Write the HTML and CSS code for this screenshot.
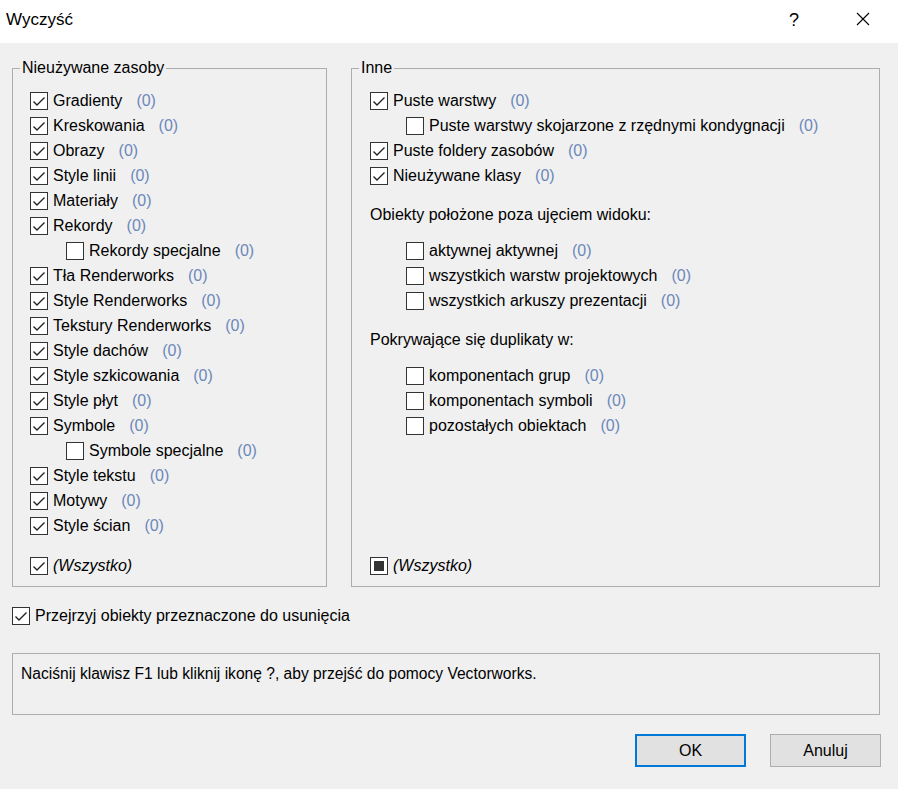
FILE: index.html
```html
<!DOCTYPE html>
<html lang="pl">
<head>
<meta charset="utf-8">
<title>Wyczyść</title>
<link rel="stylesheet" href="styles.css">
</head>
<body>
<div class="dialog">
  <div class="titlebar">
    <span class="title">Wyczyść</span>
    <span class="help">?</span>
    <span class="close"><svg width="14" height="14" viewBox="0 0 14 14"><path d="M1 1 L13 13 M13 1 L1 13" stroke="#000" stroke-width="1.1" fill="none"/></svg></span>
  </div>
  <div class="content">
    <div class="groups">
      <div class="group group-left">
        <span class="legend">Nieużywane zasoby</span>
        <div class="row"><span class="cb on"></span><span class="lbl">Gradienty</span><span class="cnt">(0)</span></div>
        <div class="row"><span class="cb on"></span><span class="lbl">Kreskowania</span><span class="cnt">(0)</span></div>
        <div class="row"><span class="cb on"></span><span class="lbl">Obrazy</span><span class="cnt">(0)</span></div>
        <div class="row"><span class="cb on"></span><span class="lbl">Style linii</span><span class="cnt">(0)</span></div>
        <div class="row"><span class="cb on"></span><span class="lbl">Materiały</span><span class="cnt">(0)</span></div>
        <div class="row"><span class="cb on"></span><span class="lbl">Rekordy</span><span class="cnt">(0)</span></div>
        <div class="row sub"><span class="cb"></span><span class="lbl">Rekordy specjalne</span><span class="cnt">(0)</span></div>
        <div class="row"><span class="cb on"></span><span class="lbl">Tła Renderworks</span><span class="cnt">(0)</span></div>
        <div class="row"><span class="cb on"></span><span class="lbl">Style Renderworks</span><span class="cnt">(0)</span></div>
        <div class="row"><span class="cb on"></span><span class="lbl">Tekstury Renderworks</span><span class="cnt">(0)</span></div>
        <div class="row"><span class="cb on"></span><span class="lbl">Style dachów</span><span class="cnt">(0)</span></div>
        <div class="row"><span class="cb on"></span><span class="lbl">Style szkicowania</span><span class="cnt">(0)</span></div>
        <div class="row"><span class="cb on"></span><span class="lbl">Style płyt</span><span class="cnt">(0)</span></div>
        <div class="row"><span class="cb on"></span><span class="lbl">Symbole</span><span class="cnt">(0)</span></div>
        <div class="row sub"><span class="cb"></span><span class="lbl">Symbole specjalne</span><span class="cnt">(0)</span></div>
        <div class="row"><span class="cb on"></span><span class="lbl">Style tekstu</span><span class="cnt">(0)</span></div>
        <div class="row"><span class="cb on"></span><span class="lbl">Motywy</span><span class="cnt">(0)</span></div>
        <div class="row"><span class="cb on"></span><span class="lbl">Style ścian</span><span class="cnt">(0)</span></div>
        <div class="row all"><span class="cb on"></span><span class="lbl it">(Wszystko)</span></div>
      </div>
      <div class="group group-right">
        <span class="legend">Inne</span>
        <div class="row"><span class="cb on"></span><span class="lbl">Puste warstwy</span><span class="cnt">(0)</span></div>
        <div class="row sub"><span class="cb"></span><span class="lbl">Puste warstwy skojarzone z rzędnymi kondygnacji</span><span class="cnt">(0)</span></div>
        <div class="row"><span class="cb on"></span><span class="lbl">Puste foldery zasobów</span><span class="cnt">(0)</span></div>
        <div class="row"><span class="cb on"></span><span class="lbl">Nieużywane klasy</span><span class="cnt">(0)</span></div>
        <div class="heading">Obiekty położone poza ujęciem widoku:</div>
        <div class="row sub"><span class="cb"></span><span class="lbl">aktywnej aktywnej</span><span class="cnt">(0)</span></div>
        <div class="row sub"><span class="cb"></span><span class="lbl">wszystkich warstw projektowych</span><span class="cnt">(0)</span></div>
        <div class="row sub"><span class="cb"></span><span class="lbl">wszystkich arkuszy prezentacji</span><span class="cnt">(0)</span></div>
        <div class="heading">Pokrywające się duplikaty w:</div>
        <div class="row sub"><span class="cb"></span><span class="lbl">komponentach grup</span><span class="cnt">(0)</span></div>
        <div class="row sub"><span class="cb"></span><span class="lbl">komponentach symboli</span><span class="cnt">(0)</span></div>
        <div class="row sub"><span class="cb"></span><span class="lbl">pozostałych obiektach</span><span class="cnt">(0)</span></div>
        <div class="row all"><span class="cb mixed"></span><span class="lbl it">(Wszystko)</span></div>
      </div>
    </div>
    <div class="row review"><span class="cb on"></span><span class="lbl">Przejrzyj obiekty przeznaczone do usunięcia</span></div>
    <div class="helpbox">Naciśnij klawisz F1 lub kliknij ikonę ?, aby przejść do pomocy Vectorworks.</div>
    <div class="buttons">
      <button class="btn default">OK</button>
      <button class="btn">Anuluj</button>
    </div>
  </div>
</div>
</body>
</html>
```
FILE: styles.css
```css
html, body {
  margin: 0;
  padding: 0;
}
body {
  width: 898px;
  height: 789px;
  overflow: hidden;
  background: #f0f0f0;
  font-family: "Liberation Sans", Arial, sans-serif;
  font-size: 16px;
  color: #000;
}
.dialog {
  width: 898px;
  height: 789px;
  display: flex;
  flex-direction: column;
}
.titlebar {
  height: 43px;
  background: #fff;
  display: flex;
  align-items: center;
  padding-left: 6px;
  box-sizing: border-box;
}
.title {
  font-size: 17px;
  flex: 1;
  margin-top: -3px;
}
.help {
  font-size: 18px;
  width: 20px;
  margin-right: 47px;
  margin-top: -3px;
}
.close {
  width: 14px;
  height: 14px;
  margin-right: 28px;
  margin-top: -6px;
  display: flex;
}
.content {
  flex: 1;
  padding: 25px 18px 0 12px;
  display: flex;
  flex-direction: column;
}
.groups {
  display: flex;
  gap: 24px;
  height: 519px;
}
.group {
  position: relative;
  border: 1px solid #adadad;
  box-sizing: border-box;
  display: flex;
  flex-direction: column;
  padding: 19px 0 8px 17px;
}
.group-left {
  width: 315px;
}
.group-right {
  flex: 1;
  padding-left: 18px;
}
.legend {
  position: absolute;
  top: -11px;
  left: 7px;
  padding: 0 2px;
  background: #f0f0f0;
  line-height: 20px;
}
.row {
  height: 25px;
  display: flex;
  align-items: center;
  white-space: nowrap;
}
.row.sub {
  padding-left: 36px;
}
.row.all {
  margin-top: auto;
}
.cb {
  width: 18px;
  height: 18px;
  box-sizing: border-box;
  border: 1px solid #333;
  background: #fff;
  margin-right: 5px;
  flex: none;
  position: relative;
}
.cb.on {
  background: #fff url("data:image/svg+xml;utf8,<svg xmlns='http://www.w3.org/2000/svg' width='16' height='16' viewBox='0 0 16 16'><polyline points='2.5,8.5 6,12 13.5,4.5' fill='none' stroke='%23222' stroke-width='1.4'/></svg>") no-repeat center;
}
.cb.mixed::after {
  content: "";
  position: absolute;
  left: 3px;
  top: 3px;
  width: 10px;
  height: 10px;
  background: #333;
}
.cnt {
  color: #6c88ba;
  margin-left: 14px;
}
.it {
  font-style: italic;
}
.heading {
  height: 25px;
  line-height: 25px;
  margin-top: 14px;
  margin-bottom: 11px;
}
.review {
  margin-top: 16px;
}
.helpbox {
  margin-top: 25px;
  height: 62px;
  box-sizing: border-box;
  border: 1px solid #adadad;
  padding: 10px 8px;
  line-height: 20px;
  font-size: 15.6px;
}
.buttons {
  margin-top: 19px;
  display: flex;
  justify-content: flex-end;
  gap: 24px;
  margin-right: -1px;
}
.btn {
  width: 111px;
  height: 33px;
  background: #e1e1e1;
  border: 1px solid #adadad;
  font-family: "Liberation Sans", Arial, sans-serif;
  font-size: 16px;
  color: #000;
  padding: 0;
  box-sizing: border-box;
}
.btn.default {
  border: 2px solid #0078d7;
}
```
